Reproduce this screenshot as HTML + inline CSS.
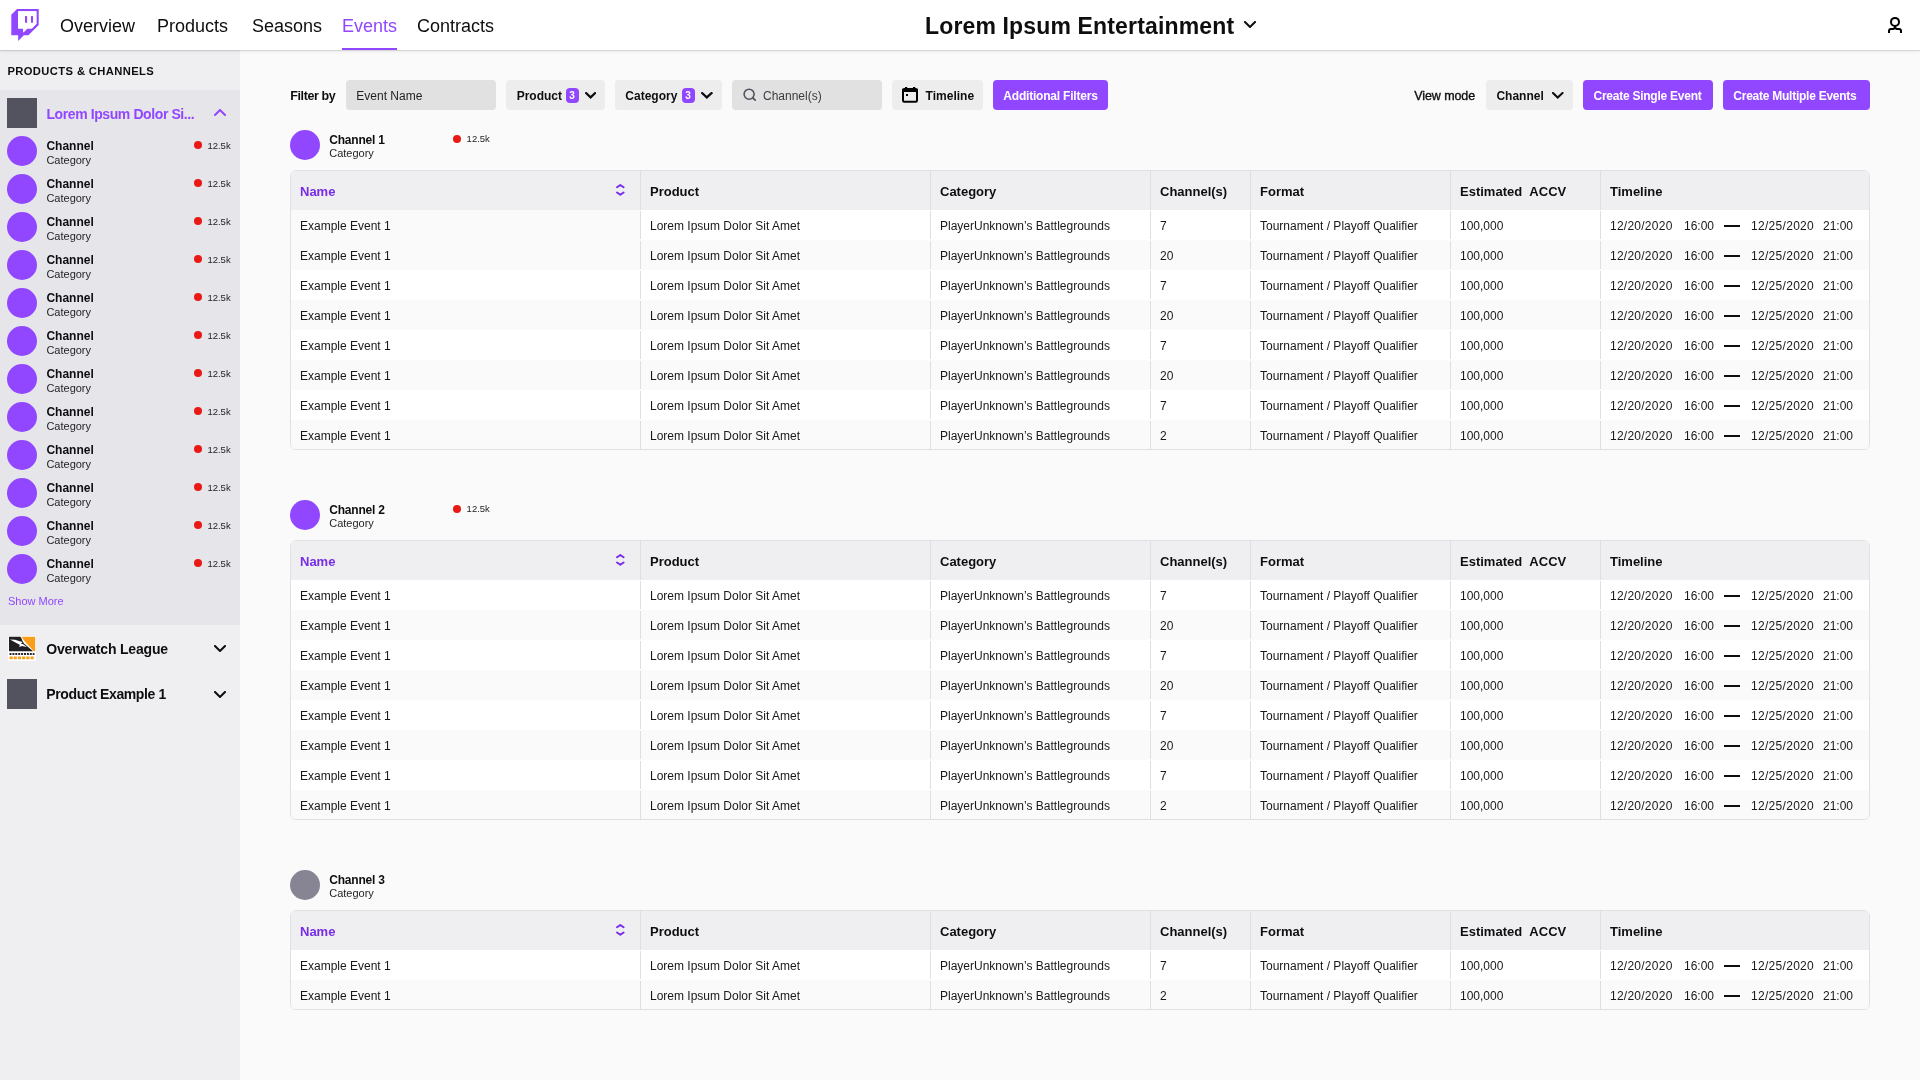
<!DOCTYPE html>
<html><head><meta charset="utf-8"><title>Events</title><style>
*{box-sizing:border-box;margin:0;padding:0}
html,body{width:1920px;height:1080px;overflow:hidden}
body{font-family:"Liberation Sans",sans-serif;background:#fafafa;color:#0e0e10;position:relative}
.a{position:absolute;white-space:nowrap}
#hdr{position:absolute;left:0;top:0;width:1920px;height:50px;background:#fff;box-shadow:0 1px 1px rgba(0,0,0,0.1),0 1px 4px rgba(0,0,0,0.08);z-index:5}
.nav{position:absolute;top:14px;font-size:18px;line-height:22px;color:#0e0e10}
#side{position:absolute;left:0;top:50px;width:240px;height:1030px;background:#efeff1}
.exp{position:absolute;left:0;top:40px;width:240px;height:535px;background:#e5e5ea}
.sq{position:absolute;width:30px;height:30px;background:#53535f}
.circ{position:absolute;width:30px;height:30px;border-radius:50%;background:#9147ff}
.chn{position:absolute;left:46px;font-size:12px;font-weight:700;line-height:14px}
.cat{position:absolute;left:46px;font-size:11px;line-height:13px;color:#1f1f23}
.dot{position:absolute;width:8px;height:8px;border-radius:50%;background:#e91916}
.vw{position:absolute;font-size:10px;line-height:12px;color:#1f1f23}
.btn{position:absolute;top:80px;height:30px;border-radius:4px;font-size:13px;line-height:30px;white-space:nowrap}
.gin{background:#e1e1e2}
.gdd{background:#ededee}
.pb{background:#9147ff;color:#fff;font-weight:700}
.badge{display:inline-block;width:13px;height:15px;border-radius:3px;background:#9147ff;color:#fff;font-size:11px;line-height:15px;text-align:center;font-weight:400;vertical-align:1px}
.tbl{position:absolute;left:290px;width:1580px;border:1px solid #e0e0e4;border-radius:6px;overflow:hidden;background:#fff}
.th{position:relative;height:39px;background:#efeff1}
.tr{position:relative;height:30px;background:#fff}
.tr.alt{background:#fafafa}
.c{position:absolute;top:0;height:100%;white-space:nowrap}
.th .c{font-size:13px;font-weight:700;line-height:39px;padding-left:10px;top:1px}
.th .c.f,.tr .c.f{padding-left:9px}
.tr .c{font-size:12px;line-height:30px;padding-left:10px;color:#18181b;top:1px}
.dv{position:absolute;width:1px;background:#dedee3}
</style></head>
<body><div id="root" style="position:absolute;left:0;top:0;width:1920px;height:1080px;overflow:hidden;will-change:transform">
<div id="side">
<div class="exp"></div>
</div>
<div class="a" style="left:7.4px;top:65.08px;font-size:11.2px;line-height:12.88px;font-weight:700;color:#0e0e10;letter-spacing:0.4px;">PRODUCTS &amp; CHANNELS</div>
<div class="sq" style="left:7px;top:98px"></div>
<div class="a" style="left:46.4px;top:105.50px;font-size:14px;line-height:16.1px;font-weight:700;color:#9147ff;letter-spacing:-0.4px;">Lorem Ipsum Dolor Si...</div>
<svg class="a" style="left:214px;top:109px" width="12" height="7" viewBox="0 0 12 7"><path d="M1.0,6.0 L6.0,1.0 L11.0,6.0" fill="none" stroke="#9147ff" stroke-width="2" stroke-linecap="square" stroke-linejoin="miter"/></svg>
<div class="circ" style="left:7px;top:136px"></div>
<div class="a" style="left:46.4px;top:140.44px;font-size:12px;line-height:13.8px;font-weight:700;">Channel</div>
<div class="a" style="left:46.4px;top:153.66px;font-size:11px;line-height:12.65px;color:#1f1f23;">Category</div>
<div class="dot" style="left:194px;top:141px"></div>
<div class="a" style="left:207.4px;top:140.75px;font-size:9.5px;line-height:10.92px;color:#1f1f23;">12.5k</div>
<div class="circ" style="left:7px;top:174px"></div>
<div class="a" style="left:46.4px;top:178.44px;font-size:12px;line-height:13.8px;font-weight:700;">Channel</div>
<div class="a" style="left:46.4px;top:191.66px;font-size:11px;line-height:12.65px;color:#1f1f23;">Category</div>
<div class="dot" style="left:194px;top:179px"></div>
<div class="a" style="left:207.4px;top:178.75px;font-size:9.5px;line-height:10.92px;color:#1f1f23;">12.5k</div>
<div class="circ" style="left:7px;top:212px"></div>
<div class="a" style="left:46.4px;top:216.44px;font-size:12px;line-height:13.8px;font-weight:700;">Channel</div>
<div class="a" style="left:46.4px;top:229.66px;font-size:11px;line-height:12.65px;color:#1f1f23;">Category</div>
<div class="dot" style="left:194px;top:217px"></div>
<div class="a" style="left:207.4px;top:216.75px;font-size:9.5px;line-height:10.92px;color:#1f1f23;">12.5k</div>
<div class="circ" style="left:7px;top:250px"></div>
<div class="a" style="left:46.4px;top:254.44px;font-size:12px;line-height:13.8px;font-weight:700;">Channel</div>
<div class="a" style="left:46.4px;top:267.66px;font-size:11px;line-height:12.65px;color:#1f1f23;">Category</div>
<div class="dot" style="left:194px;top:255px"></div>
<div class="a" style="left:207.4px;top:254.75px;font-size:9.5px;line-height:10.92px;color:#1f1f23;">12.5k</div>
<div class="circ" style="left:7px;top:288px"></div>
<div class="a" style="left:46.4px;top:292.44px;font-size:12px;line-height:13.8px;font-weight:700;">Channel</div>
<div class="a" style="left:46.4px;top:305.66px;font-size:11px;line-height:12.65px;color:#1f1f23;">Category</div>
<div class="dot" style="left:194px;top:293px"></div>
<div class="a" style="left:207.4px;top:292.75px;font-size:9.5px;line-height:10.92px;color:#1f1f23;">12.5k</div>
<div class="circ" style="left:7px;top:326px"></div>
<div class="a" style="left:46.4px;top:330.44px;font-size:12px;line-height:13.8px;font-weight:700;">Channel</div>
<div class="a" style="left:46.4px;top:343.66px;font-size:11px;line-height:12.65px;color:#1f1f23;">Category</div>
<div class="dot" style="left:194px;top:331px"></div>
<div class="a" style="left:207.4px;top:330.75px;font-size:9.5px;line-height:10.92px;color:#1f1f23;">12.5k</div>
<div class="circ" style="left:7px;top:364px"></div>
<div class="a" style="left:46.4px;top:368.44px;font-size:12px;line-height:13.8px;font-weight:700;">Channel</div>
<div class="a" style="left:46.4px;top:381.66px;font-size:11px;line-height:12.65px;color:#1f1f23;">Category</div>
<div class="dot" style="left:194px;top:369px"></div>
<div class="a" style="left:207.4px;top:368.75px;font-size:9.5px;line-height:10.92px;color:#1f1f23;">12.5k</div>
<div class="circ" style="left:7px;top:402px"></div>
<div class="a" style="left:46.4px;top:406.44px;font-size:12px;line-height:13.8px;font-weight:700;">Channel</div>
<div class="a" style="left:46.4px;top:419.66px;font-size:11px;line-height:12.65px;color:#1f1f23;">Category</div>
<div class="dot" style="left:194px;top:407px"></div>
<div class="a" style="left:207.4px;top:406.75px;font-size:9.5px;line-height:10.92px;color:#1f1f23;">12.5k</div>
<div class="circ" style="left:7px;top:440px"></div>
<div class="a" style="left:46.4px;top:444.44px;font-size:12px;line-height:13.8px;font-weight:700;">Channel</div>
<div class="a" style="left:46.4px;top:457.66px;font-size:11px;line-height:12.65px;color:#1f1f23;">Category</div>
<div class="dot" style="left:194px;top:445px"></div>
<div class="a" style="left:207.4px;top:444.75px;font-size:9.5px;line-height:10.92px;color:#1f1f23;">12.5k</div>
<div class="circ" style="left:7px;top:478px"></div>
<div class="a" style="left:46.4px;top:482.44px;font-size:12px;line-height:13.8px;font-weight:700;">Channel</div>
<div class="a" style="left:46.4px;top:495.66px;font-size:11px;line-height:12.65px;color:#1f1f23;">Category</div>
<div class="dot" style="left:194px;top:483px"></div>
<div class="a" style="left:207.4px;top:482.75px;font-size:9.5px;line-height:10.92px;color:#1f1f23;">12.5k</div>
<div class="circ" style="left:7px;top:516px"></div>
<div class="a" style="left:46.4px;top:520.44px;font-size:12px;line-height:13.8px;font-weight:700;">Channel</div>
<div class="a" style="left:46.4px;top:533.66px;font-size:11px;line-height:12.65px;color:#1f1f23;">Category</div>
<div class="dot" style="left:194px;top:521px"></div>
<div class="a" style="left:207.4px;top:520.75px;font-size:9.5px;line-height:10.92px;color:#1f1f23;">12.5k</div>
<div class="circ" style="left:7px;top:554px"></div>
<div class="a" style="left:46.4px;top:558.44px;font-size:12px;line-height:13.8px;font-weight:700;">Channel</div>
<div class="a" style="left:46.4px;top:571.66px;font-size:11px;line-height:12.65px;color:#1f1f23;">Category</div>
<div class="dot" style="left:194px;top:559px"></div>
<div class="a" style="left:207.4px;top:558.75px;font-size:9.5px;line-height:10.92px;color:#1f1f23;">12.5k</div>
<div class="a" style="left:8px;top:595.36px;font-size:11px;line-height:12.65px;color:#9147ff;">Show More</div>
<svg class="a" style="left:8px;top:636px" width="28" height="25" viewBox="0 0 28 25"><rect x="0" y="0" width="28" height="25" rx="1" fill="#fff"/><path d="M1,0.8 H12.5 L13.5,2.5 L14.5,5 L16,7.5 L19,10 L23,13.5 L25,15.3 H1 Z" fill="#202024"/><path d="M13.5,0.8 H27.2 V15.3 H25.6 L22,11 L19,8 L16,4.5 Z" fill="#f99e1a"/><path d="M2,3.5 L7,3.8 L11,5 L14.5,6 L13,7.5 L15.5,8.5 L19,11 L14,10 L11,11 L12,9 Z" fill="#fff"/><path d="M1.5,18 H26.5" stroke="#2a2a2e" stroke-width="1.8" stroke-dasharray="2 0.9"/><path d="M1.5,21.8 H26.5" stroke="#f99e1a" stroke-width="2.8" stroke-dasharray="3.2 1"/></svg>
<div class="a" style="left:46.3px;top:640.90px;font-size:14px;line-height:16.1px;font-weight:700;letter-spacing:-0.18px;">Overwatch League</div>
<svg class="a" style="left:214px;top:645px" width="12" height="7" viewBox="0 0 12 7"><path d="M1.0,1.0 L6.0,6.0 L11.0,1.0" fill="none" stroke="#0e0e10" stroke-width="2" stroke-linecap="square" stroke-linejoin="miter"/></svg>
<div class="sq" style="left:7px;top:679px"></div>
<div class="a" style="left:46.3px;top:685.90px;font-size:14px;line-height:16.1px;font-weight:700;letter-spacing:-0.38px;">Product Example 1</div>
<svg class="a" style="left:214px;top:691px" width="12" height="7" viewBox="0 0 12 7"><path d="M1.0,1.0 L6.0,6.0 L11.0,1.0" fill="none" stroke="#0e0e10" stroke-width="2" stroke-linecap="square" stroke-linejoin="miter"/></svg>
<div id="hdr">
<svg class="a" style="left:11px;top:9px" width="28" height="32" viewBox="0 0 2400 2800"><path fill="#9147ff" d="M500,0L0,500v1800h600v500l500-500h400l900-900V0H500z M2200,1300l-400,400h-400l-350,350v-350H600V200h1600V1300z"/><path fill="#fff" d="M2200,1300l-400,400h-400l-350,350v-350H600V200h1600V1300z"/><rect fill="#9147ff" x="1720" y="620" width="185" height="580"/><rect fill="#9147ff" x="1200" y="620" width="185" height="580"/></svg>
<div class="a" style="left:60px;top:16.01px;font-size:18px;line-height:20.7px;color:#0e0e10;">Overview</div>
<div class="a" style="left:157px;top:16.01px;font-size:18px;line-height:20.7px;color:#0e0e10;">Products</div>
<div class="a" style="left:252px;top:16.01px;font-size:18px;line-height:20.7px;color:#0e0e10;">Seasons</div>
<div class="a" style="left:342px;top:16.01px;font-size:18px;line-height:20.7px;color:#9147ff;">Events</div>
<div class="a" style="left:417px;top:16.01px;font-size:18px;line-height:20.7px;color:#0e0e10;">Contracts</div>
<div class="a" style="left:342px;top:48px;width:55px;height:2px;background:#9147ff"></div>
<div class="a" style="left:925px;top:12.91px;font-size:23px;line-height:26.45px;font-weight:700;letter-spacing:0.15px;">Lorem Ipsum Entertainment</div>
<svg class="a" style="left:1244px;top:21px" width="12" height="7" viewBox="0 0 12 7"><path d="M1.0,1.0 L6.0,6.0 L11.0,1.0" fill="none" stroke="#0e0e10" stroke-width="2" stroke-linecap="square" stroke-linejoin="miter"/></svg>
<svg class="a" style="left:1880px;top:10px" width="30" height="30" viewBox="0 0 30 30"><circle cx="15" cy="11.9" r="4" fill="none" stroke="#000" stroke-width="2"/><path d="M9,23 V21 Q9,19 11,19 H13 Q14.6,19 15,16.8 Q15.4,19 17,19 H19 Q21,19 21,21 V23" fill="none" stroke="#000" stroke-width="2" stroke-linejoin="round"/></svg>
</div>
<div class="a" style="left:290.3px;top:89.48px;font-size:12.5px;line-height:14.37px;font-weight:700;color:#0e0e10;letter-spacing:-0.4px;">Filter by</div>
<div class="btn gin" style="left:346px;width:150px"></div>
<div class="a" style="left:356.3px;top:89.94px;font-size:12px;line-height:13.8px;color:#1f1f23;">Event Name</div>
<div class="btn gdd" style="left:506px;width:99px"></div>
<div class="a" style="left:516.7px;top:89.94px;font-size:12px;line-height:13.8px;font-weight:700;">Product</div>
<div class="a" style="left:566px;top:88px;width:13px;height:15px;border-radius:4px;background:#9147ff"></div>
<div class="a" style="left:569.3px;top:90.48px;font-size:10px;line-height:11.5px;font-weight:700;color:#fff;">3</div>
<svg class="a" style="left:584.5px;top:92px" width="11.2" height="6.5" viewBox="0 0 11.2 6.5"><path d="M1.1,1.1 L5.6,5.4 L10.1,1.1" fill="none" stroke="#0e0e10" stroke-width="2.2" stroke-linecap="square" stroke-linejoin="miter"/></svg>
<div class="btn gdd" style="left:615px;width:107px"></div>
<div class="a" style="left:625.3px;top:89.94px;font-size:12px;line-height:13.8px;font-weight:700;">Category</div>
<div class="a" style="left:682px;top:88px;width:13px;height:15px;border-radius:4px;background:#9147ff"></div>
<div class="a" style="left:685.3px;top:90.48px;font-size:10px;line-height:11.5px;font-weight:700;color:#fff;">3</div>
<svg class="a" style="left:701.2px;top:92px" width="11.6" height="6.5" viewBox="0 0 11.6 6.5"><path d="M1.1,1.1 L5.8,5.4 L10.5,1.1" fill="none" stroke="#0e0e10" stroke-width="2.2" stroke-linecap="square" stroke-linejoin="miter"/></svg>
<div class="btn gin" style="left:732px;width:150px"></div>
<svg class="a" style="left:742px;top:87px" width="16" height="16" viewBox="0 0 16 16"><circle cx="7.1" cy="7.2" r="5" fill="none" stroke="#53535f" stroke-width="1.6"/><path d="M10.9,11 L13.2,13.1" stroke="#53535f" stroke-width="1.7" stroke-linecap="round"/></svg>
<div class="a" style="left:763px;top:89.94px;font-size:12px;line-height:13.8px;color:#3a3a3f;">Channel(s)</div>
<div class="btn gdd" style="left:892px;width:91px"></div>
<svg class="a" style="left:901px;top:86px" width="18" height="18" viewBox="0 0 18 18"><rect x="2" y="3" width="14" height="12.8" rx="1.2" fill="none" stroke="#000" stroke-width="2"/><rect x="1" y="3" width="16" height="3" fill="#000"/><rect x="4" y="1" width="2.2" height="3" fill="#000"/><rect x="12" y="1" width="2.2" height="3" fill="#000"/><rect x="5" y="8" width="2" height="2" fill="#000"/></svg>
<div class="a" style="left:925.6px;top:89.94px;font-size:12px;line-height:13.8px;font-weight:700;">Timeline</div>
<div class="btn pb" style="left:993px;width:115px"></div>
<div class="a" style="left:1003.3px;top:89.94px;font-size:12px;line-height:13.8px;font-weight:700;color:#fff;letter-spacing:-0.2px;">Additional Filters</div>
<div class="a" style="left:1414.3px;top:89.48px;font-size:12.5px;line-height:14.37px;color:#0e0e10;letter-spacing:-0.1px;-webkit-text-stroke:0.35px #0e0e10;">View mode</div>
<div class="btn gdd" style="left:1486px;width:87px"></div>
<div class="a" style="left:1496.4px;top:89.94px;font-size:12px;line-height:13.8px;font-weight:700;">Channel</div>
<svg class="a" style="left:1552px;top:92px" width="11.5" height="6.5" viewBox="0 0 11.5 6.5"><path d="M1.0,1.0 L5.75,5.5 L10.5,1.0" fill="none" stroke="#0e0e10" stroke-width="2" stroke-linecap="square" stroke-linejoin="miter"/></svg>
<div class="btn pb" style="left:1583px;width:130px"></div>
<div class="a" style="left:1593.5px;top:89.94px;font-size:12px;line-height:13.8px;font-weight:700;color:#fff;letter-spacing:-0.25px;">Create Single Event</div>
<div class="btn pb" style="left:1723px;width:147px"></div>
<div class="a" style="left:1733.3px;top:89.94px;font-size:12px;line-height:13.8px;font-weight:700;color:#fff;letter-spacing:-0.25px;">Create Multiple Events</div>
<div class="circ" style="left:290px;top:130px;background:#9147ff"></div>
<div class="a" style="left:329.2px;top:133.74px;font-size:12px;line-height:13.8px;font-weight:700;letter-spacing:-0.2px;">Channel 1</div>
<div class="a" style="left:329.2px;top:147.16px;font-size:11px;line-height:12.65px;color:#1f1f23;">Category</div>
<div class="dot" style="left:453px;top:134.8px"></div>
<div class="a" style="left:466.6px;top:134.35px;font-size:9.5px;line-height:10.92px;color:#1f1f23;">12.5k</div>
<div class="tbl" style="top:170px;height:280px">
<div class="th">
<div class="c f" style="left:0px;width:349px;color:#772ce8">Name</div>
<div class="c" style="left:349px;width:290px;color:#0e0e10">Product</div>
<div class="dv" style="left:349px;top:0;height:39px"></div>
<div class="c" style="left:639px;width:220px;color:#0e0e10">Category</div>
<div class="dv" style="left:639px;top:0;height:39px"></div>
<div class="c" style="left:859px;width:100px;color:#0e0e10">Channel(s)</div>
<div class="dv" style="left:859px;top:0;height:39px"></div>
<div class="c" style="left:959px;width:200px;color:#0e0e10">Format</div>
<div class="dv" style="left:959px;top:0;height:39px"></div>
<div class="c" style="left:1159px;width:150px;color:#0e0e10">Estimated&nbsp;&nbsp;ACCV</div>
<div class="dv" style="left:1159px;top:0;height:39px"></div>
<div class="c" style="left:1309px;width:269px;color:#0e0e10">Timeline</div>
<div class="dv" style="left:1309px;top:0;height:39px"></div>
<svg class="a" style="left:325px;top:13px" width="9" height="13" viewBox="0 0 9 13"><path d="M1,3.3 L4.3,1.0 L7.6,3.3 M1,8.5 L4.3,10.8 L7.6,8.5" fill="none" stroke="#772ce8" stroke-width="1.9" stroke-linejoin="round" stroke-linecap="round"/></svg>
</div>
<div class="tr">
<div class="a" style="left:0;top:0;width:349px;height:30px;background:#fafafa"></div>
<div class="c f" style="left:0px;width:349px">Example Event 1</div>
<div class="c" style="left:349px;width:290px">Lorem Ipsum Dolor Sit Amet</div>
<div class="c" style="left:639px;width:220px">PlayerUnknown’s Battlegrounds</div>
<div class="c" style="left:859px;width:100px">7</div>
<div class="c" style="left:959px;width:200px">Tournament / Playoff Qualifier</div>
<div class="c" style="left:1159px;width:150px">100,000</div>
<div class="c" style="left:1309px;width:269px"><span class="a" style="left:10px;letter-spacing:0.25px">12/20/2020</span><span class="a" style="left:84px">16:00</span><span class="a" style="left:124px;top:14px;width:16px;height:2px;background:#0e0e10"></span><span class="a" style="left:151px;letter-spacing:0.3px">12/25/2020</span><span class="a" style="left:223px">21:00</span></div>
<div class="dv" style="left:349px;top:1px;height:28px"></div>
<div class="dv" style="left:639px;top:1px;height:28px"></div>
<div class="dv" style="left:859px;top:1px;height:28px"></div>
<div class="dv" style="left:959px;top:1px;height:28px"></div>
<div class="dv" style="left:1159px;top:1px;height:28px"></div>
<div class="dv" style="left:1309px;top:1px;height:28px"></div>
</div>
<div class="tr alt">
<div class="c f" style="left:0px;width:349px">Example Event 1</div>
<div class="c" style="left:349px;width:290px">Lorem Ipsum Dolor Sit Amet</div>
<div class="c" style="left:639px;width:220px">PlayerUnknown’s Battlegrounds</div>
<div class="c" style="left:859px;width:100px">20</div>
<div class="c" style="left:959px;width:200px">Tournament / Playoff Qualifier</div>
<div class="c" style="left:1159px;width:150px">100,000</div>
<div class="c" style="left:1309px;width:269px"><span class="a" style="left:10px;letter-spacing:0.25px">12/20/2020</span><span class="a" style="left:84px">16:00</span><span class="a" style="left:124px;top:14px;width:16px;height:2px;background:#0e0e10"></span><span class="a" style="left:151px;letter-spacing:0.3px">12/25/2020</span><span class="a" style="left:223px">21:00</span></div>
<div class="dv" style="left:349px;top:1px;height:28px"></div>
<div class="dv" style="left:639px;top:1px;height:28px"></div>
<div class="dv" style="left:859px;top:1px;height:28px"></div>
<div class="dv" style="left:959px;top:1px;height:28px"></div>
<div class="dv" style="left:1159px;top:1px;height:28px"></div>
<div class="dv" style="left:1309px;top:1px;height:28px"></div>
</div>
<div class="tr">
<div class="c f" style="left:0px;width:349px">Example Event 1</div>
<div class="c" style="left:349px;width:290px">Lorem Ipsum Dolor Sit Amet</div>
<div class="c" style="left:639px;width:220px">PlayerUnknown’s Battlegrounds</div>
<div class="c" style="left:859px;width:100px">7</div>
<div class="c" style="left:959px;width:200px">Tournament / Playoff Qualifier</div>
<div class="c" style="left:1159px;width:150px">100,000</div>
<div class="c" style="left:1309px;width:269px"><span class="a" style="left:10px;letter-spacing:0.25px">12/20/2020</span><span class="a" style="left:84px">16:00</span><span class="a" style="left:124px;top:14px;width:16px;height:2px;background:#0e0e10"></span><span class="a" style="left:151px;letter-spacing:0.3px">12/25/2020</span><span class="a" style="left:223px">21:00</span></div>
<div class="dv" style="left:349px;top:1px;height:28px"></div>
<div class="dv" style="left:639px;top:1px;height:28px"></div>
<div class="dv" style="left:859px;top:1px;height:28px"></div>
<div class="dv" style="left:959px;top:1px;height:28px"></div>
<div class="dv" style="left:1159px;top:1px;height:28px"></div>
<div class="dv" style="left:1309px;top:1px;height:28px"></div>
</div>
<div class="tr alt">
<div class="c f" style="left:0px;width:349px">Example Event 1</div>
<div class="c" style="left:349px;width:290px">Lorem Ipsum Dolor Sit Amet</div>
<div class="c" style="left:639px;width:220px">PlayerUnknown’s Battlegrounds</div>
<div class="c" style="left:859px;width:100px">20</div>
<div class="c" style="left:959px;width:200px">Tournament / Playoff Qualifier</div>
<div class="c" style="left:1159px;width:150px">100,000</div>
<div class="c" style="left:1309px;width:269px"><span class="a" style="left:10px;letter-spacing:0.25px">12/20/2020</span><span class="a" style="left:84px">16:00</span><span class="a" style="left:124px;top:14px;width:16px;height:2px;background:#0e0e10"></span><span class="a" style="left:151px;letter-spacing:0.3px">12/25/2020</span><span class="a" style="left:223px">21:00</span></div>
<div class="dv" style="left:349px;top:1px;height:28px"></div>
<div class="dv" style="left:639px;top:1px;height:28px"></div>
<div class="dv" style="left:859px;top:1px;height:28px"></div>
<div class="dv" style="left:959px;top:1px;height:28px"></div>
<div class="dv" style="left:1159px;top:1px;height:28px"></div>
<div class="dv" style="left:1309px;top:1px;height:28px"></div>
</div>
<div class="tr">
<div class="c f" style="left:0px;width:349px">Example Event 1</div>
<div class="c" style="left:349px;width:290px">Lorem Ipsum Dolor Sit Amet</div>
<div class="c" style="left:639px;width:220px">PlayerUnknown’s Battlegrounds</div>
<div class="c" style="left:859px;width:100px">7</div>
<div class="c" style="left:959px;width:200px">Tournament / Playoff Qualifier</div>
<div class="c" style="left:1159px;width:150px">100,000</div>
<div class="c" style="left:1309px;width:269px"><span class="a" style="left:10px;letter-spacing:0.25px">12/20/2020</span><span class="a" style="left:84px">16:00</span><span class="a" style="left:124px;top:14px;width:16px;height:2px;background:#0e0e10"></span><span class="a" style="left:151px;letter-spacing:0.3px">12/25/2020</span><span class="a" style="left:223px">21:00</span></div>
<div class="dv" style="left:349px;top:1px;height:28px"></div>
<div class="dv" style="left:639px;top:1px;height:28px"></div>
<div class="dv" style="left:859px;top:1px;height:28px"></div>
<div class="dv" style="left:959px;top:1px;height:28px"></div>
<div class="dv" style="left:1159px;top:1px;height:28px"></div>
<div class="dv" style="left:1309px;top:1px;height:28px"></div>
</div>
<div class="tr alt">
<div class="c f" style="left:0px;width:349px">Example Event 1</div>
<div class="c" style="left:349px;width:290px">Lorem Ipsum Dolor Sit Amet</div>
<div class="c" style="left:639px;width:220px">PlayerUnknown’s Battlegrounds</div>
<div class="c" style="left:859px;width:100px">20</div>
<div class="c" style="left:959px;width:200px">Tournament / Playoff Qualifier</div>
<div class="c" style="left:1159px;width:150px">100,000</div>
<div class="c" style="left:1309px;width:269px"><span class="a" style="left:10px;letter-spacing:0.25px">12/20/2020</span><span class="a" style="left:84px">16:00</span><span class="a" style="left:124px;top:14px;width:16px;height:2px;background:#0e0e10"></span><span class="a" style="left:151px;letter-spacing:0.3px">12/25/2020</span><span class="a" style="left:223px">21:00</span></div>
<div class="dv" style="left:349px;top:1px;height:28px"></div>
<div class="dv" style="left:639px;top:1px;height:28px"></div>
<div class="dv" style="left:859px;top:1px;height:28px"></div>
<div class="dv" style="left:959px;top:1px;height:28px"></div>
<div class="dv" style="left:1159px;top:1px;height:28px"></div>
<div class="dv" style="left:1309px;top:1px;height:28px"></div>
</div>
<div class="tr">
<div class="c f" style="left:0px;width:349px">Example Event 1</div>
<div class="c" style="left:349px;width:290px">Lorem Ipsum Dolor Sit Amet</div>
<div class="c" style="left:639px;width:220px">PlayerUnknown’s Battlegrounds</div>
<div class="c" style="left:859px;width:100px">7</div>
<div class="c" style="left:959px;width:200px">Tournament / Playoff Qualifier</div>
<div class="c" style="left:1159px;width:150px">100,000</div>
<div class="c" style="left:1309px;width:269px"><span class="a" style="left:10px;letter-spacing:0.25px">12/20/2020</span><span class="a" style="left:84px">16:00</span><span class="a" style="left:124px;top:14px;width:16px;height:2px;background:#0e0e10"></span><span class="a" style="left:151px;letter-spacing:0.3px">12/25/2020</span><span class="a" style="left:223px">21:00</span></div>
<div class="dv" style="left:349px;top:1px;height:28px"></div>
<div class="dv" style="left:639px;top:1px;height:28px"></div>
<div class="dv" style="left:859px;top:1px;height:28px"></div>
<div class="dv" style="left:959px;top:1px;height:28px"></div>
<div class="dv" style="left:1159px;top:1px;height:28px"></div>
<div class="dv" style="left:1309px;top:1px;height:28px"></div>
</div>
<div class="tr alt">
<div class="c f" style="left:0px;width:349px">Example Event 1</div>
<div class="c" style="left:349px;width:290px">Lorem Ipsum Dolor Sit Amet</div>
<div class="c" style="left:639px;width:220px">PlayerUnknown’s Battlegrounds</div>
<div class="c" style="left:859px;width:100px">2</div>
<div class="c" style="left:959px;width:200px">Tournament / Playoff Qualifier</div>
<div class="c" style="left:1159px;width:150px">100,000</div>
<div class="c" style="left:1309px;width:269px"><span class="a" style="left:10px;letter-spacing:0.25px">12/20/2020</span><span class="a" style="left:84px">16:00</span><span class="a" style="left:124px;top:14px;width:16px;height:2px;background:#0e0e10"></span><span class="a" style="left:151px;letter-spacing:0.3px">12/25/2020</span><span class="a" style="left:223px">21:00</span></div>
<div class="dv" style="left:349px;top:1px;height:28px"></div>
<div class="dv" style="left:639px;top:1px;height:28px"></div>
<div class="dv" style="left:859px;top:1px;height:28px"></div>
<div class="dv" style="left:959px;top:1px;height:28px"></div>
<div class="dv" style="left:1159px;top:1px;height:28px"></div>
<div class="dv" style="left:1309px;top:1px;height:28px"></div>
</div>
</div>
<div class="circ" style="left:290px;top:500px;background:#9147ff"></div>
<div class="a" style="left:329.2px;top:503.74px;font-size:12px;line-height:13.8px;font-weight:700;letter-spacing:-0.2px;">Channel 2</div>
<div class="a" style="left:329.2px;top:517.16px;font-size:11px;line-height:12.65px;color:#1f1f23;">Category</div>
<div class="dot" style="left:453px;top:504.8px"></div>
<div class="a" style="left:466.6px;top:504.35px;font-size:9.5px;line-height:10.92px;color:#1f1f23;">12.5k</div>
<div class="tbl" style="top:540px;height:280px">
<div class="th">
<div class="c f" style="left:0px;width:349px;color:#772ce8">Name</div>
<div class="c" style="left:349px;width:290px;color:#0e0e10">Product</div>
<div class="dv" style="left:349px;top:0;height:39px"></div>
<div class="c" style="left:639px;width:220px;color:#0e0e10">Category</div>
<div class="dv" style="left:639px;top:0;height:39px"></div>
<div class="c" style="left:859px;width:100px;color:#0e0e10">Channel(s)</div>
<div class="dv" style="left:859px;top:0;height:39px"></div>
<div class="c" style="left:959px;width:200px;color:#0e0e10">Format</div>
<div class="dv" style="left:959px;top:0;height:39px"></div>
<div class="c" style="left:1159px;width:150px;color:#0e0e10">Estimated&nbsp;&nbsp;ACCV</div>
<div class="dv" style="left:1159px;top:0;height:39px"></div>
<div class="c" style="left:1309px;width:269px;color:#0e0e10">Timeline</div>
<div class="dv" style="left:1309px;top:0;height:39px"></div>
<svg class="a" style="left:325px;top:13px" width="9" height="13" viewBox="0 0 9 13"><path d="M1,3.3 L4.3,1.0 L7.6,3.3 M1,8.5 L4.3,10.8 L7.6,8.5" fill="none" stroke="#772ce8" stroke-width="1.9" stroke-linejoin="round" stroke-linecap="round"/></svg>
</div>
<div class="tr">
<div class="c f" style="left:0px;width:349px">Example Event 1</div>
<div class="c" style="left:349px;width:290px">Lorem Ipsum Dolor Sit Amet</div>
<div class="c" style="left:639px;width:220px">PlayerUnknown’s Battlegrounds</div>
<div class="c" style="left:859px;width:100px">7</div>
<div class="c" style="left:959px;width:200px">Tournament / Playoff Qualifier</div>
<div class="c" style="left:1159px;width:150px">100,000</div>
<div class="c" style="left:1309px;width:269px"><span class="a" style="left:10px;letter-spacing:0.25px">12/20/2020</span><span class="a" style="left:84px">16:00</span><span class="a" style="left:124px;top:14px;width:16px;height:2px;background:#0e0e10"></span><span class="a" style="left:151px;letter-spacing:0.3px">12/25/2020</span><span class="a" style="left:223px">21:00</span></div>
<div class="dv" style="left:349px;top:1px;height:28px"></div>
<div class="dv" style="left:639px;top:1px;height:28px"></div>
<div class="dv" style="left:859px;top:1px;height:28px"></div>
<div class="dv" style="left:959px;top:1px;height:28px"></div>
<div class="dv" style="left:1159px;top:1px;height:28px"></div>
<div class="dv" style="left:1309px;top:1px;height:28px"></div>
</div>
<div class="tr alt">
<div class="c f" style="left:0px;width:349px">Example Event 1</div>
<div class="c" style="left:349px;width:290px">Lorem Ipsum Dolor Sit Amet</div>
<div class="c" style="left:639px;width:220px">PlayerUnknown’s Battlegrounds</div>
<div class="c" style="left:859px;width:100px">20</div>
<div class="c" style="left:959px;width:200px">Tournament / Playoff Qualifier</div>
<div class="c" style="left:1159px;width:150px">100,000</div>
<div class="c" style="left:1309px;width:269px"><span class="a" style="left:10px;letter-spacing:0.25px">12/20/2020</span><span class="a" style="left:84px">16:00</span><span class="a" style="left:124px;top:14px;width:16px;height:2px;background:#0e0e10"></span><span class="a" style="left:151px;letter-spacing:0.3px">12/25/2020</span><span class="a" style="left:223px">21:00</span></div>
<div class="dv" style="left:349px;top:1px;height:28px"></div>
<div class="dv" style="left:639px;top:1px;height:28px"></div>
<div class="dv" style="left:859px;top:1px;height:28px"></div>
<div class="dv" style="left:959px;top:1px;height:28px"></div>
<div class="dv" style="left:1159px;top:1px;height:28px"></div>
<div class="dv" style="left:1309px;top:1px;height:28px"></div>
</div>
<div class="tr">
<div class="c f" style="left:0px;width:349px">Example Event 1</div>
<div class="c" style="left:349px;width:290px">Lorem Ipsum Dolor Sit Amet</div>
<div class="c" style="left:639px;width:220px">PlayerUnknown’s Battlegrounds</div>
<div class="c" style="left:859px;width:100px">7</div>
<div class="c" style="left:959px;width:200px">Tournament / Playoff Qualifier</div>
<div class="c" style="left:1159px;width:150px">100,000</div>
<div class="c" style="left:1309px;width:269px"><span class="a" style="left:10px;letter-spacing:0.25px">12/20/2020</span><span class="a" style="left:84px">16:00</span><span class="a" style="left:124px;top:14px;width:16px;height:2px;background:#0e0e10"></span><span class="a" style="left:151px;letter-spacing:0.3px">12/25/2020</span><span class="a" style="left:223px">21:00</span></div>
<div class="dv" style="left:349px;top:1px;height:28px"></div>
<div class="dv" style="left:639px;top:1px;height:28px"></div>
<div class="dv" style="left:859px;top:1px;height:28px"></div>
<div class="dv" style="left:959px;top:1px;height:28px"></div>
<div class="dv" style="left:1159px;top:1px;height:28px"></div>
<div class="dv" style="left:1309px;top:1px;height:28px"></div>
</div>
<div class="tr alt">
<div class="c f" style="left:0px;width:349px">Example Event 1</div>
<div class="c" style="left:349px;width:290px">Lorem Ipsum Dolor Sit Amet</div>
<div class="c" style="left:639px;width:220px">PlayerUnknown’s Battlegrounds</div>
<div class="c" style="left:859px;width:100px">20</div>
<div class="c" style="left:959px;width:200px">Tournament / Playoff Qualifier</div>
<div class="c" style="left:1159px;width:150px">100,000</div>
<div class="c" style="left:1309px;width:269px"><span class="a" style="left:10px;letter-spacing:0.25px">12/20/2020</span><span class="a" style="left:84px">16:00</span><span class="a" style="left:124px;top:14px;width:16px;height:2px;background:#0e0e10"></span><span class="a" style="left:151px;letter-spacing:0.3px">12/25/2020</span><span class="a" style="left:223px">21:00</span></div>
<div class="dv" style="left:349px;top:1px;height:28px"></div>
<div class="dv" style="left:639px;top:1px;height:28px"></div>
<div class="dv" style="left:859px;top:1px;height:28px"></div>
<div class="dv" style="left:959px;top:1px;height:28px"></div>
<div class="dv" style="left:1159px;top:1px;height:28px"></div>
<div class="dv" style="left:1309px;top:1px;height:28px"></div>
</div>
<div class="tr">
<div class="c f" style="left:0px;width:349px">Example Event 1</div>
<div class="c" style="left:349px;width:290px">Lorem Ipsum Dolor Sit Amet</div>
<div class="c" style="left:639px;width:220px">PlayerUnknown’s Battlegrounds</div>
<div class="c" style="left:859px;width:100px">7</div>
<div class="c" style="left:959px;width:200px">Tournament / Playoff Qualifier</div>
<div class="c" style="left:1159px;width:150px">100,000</div>
<div class="c" style="left:1309px;width:269px"><span class="a" style="left:10px;letter-spacing:0.25px">12/20/2020</span><span class="a" style="left:84px">16:00</span><span class="a" style="left:124px;top:14px;width:16px;height:2px;background:#0e0e10"></span><span class="a" style="left:151px;letter-spacing:0.3px">12/25/2020</span><span class="a" style="left:223px">21:00</span></div>
<div class="dv" style="left:349px;top:1px;height:28px"></div>
<div class="dv" style="left:639px;top:1px;height:28px"></div>
<div class="dv" style="left:859px;top:1px;height:28px"></div>
<div class="dv" style="left:959px;top:1px;height:28px"></div>
<div class="dv" style="left:1159px;top:1px;height:28px"></div>
<div class="dv" style="left:1309px;top:1px;height:28px"></div>
</div>
<div class="tr alt">
<div class="c f" style="left:0px;width:349px">Example Event 1</div>
<div class="c" style="left:349px;width:290px">Lorem Ipsum Dolor Sit Amet</div>
<div class="c" style="left:639px;width:220px">PlayerUnknown’s Battlegrounds</div>
<div class="c" style="left:859px;width:100px">20</div>
<div class="c" style="left:959px;width:200px">Tournament / Playoff Qualifier</div>
<div class="c" style="left:1159px;width:150px">100,000</div>
<div class="c" style="left:1309px;width:269px"><span class="a" style="left:10px;letter-spacing:0.25px">12/20/2020</span><span class="a" style="left:84px">16:00</span><span class="a" style="left:124px;top:14px;width:16px;height:2px;background:#0e0e10"></span><span class="a" style="left:151px;letter-spacing:0.3px">12/25/2020</span><span class="a" style="left:223px">21:00</span></div>
<div class="dv" style="left:349px;top:1px;height:28px"></div>
<div class="dv" style="left:639px;top:1px;height:28px"></div>
<div class="dv" style="left:859px;top:1px;height:28px"></div>
<div class="dv" style="left:959px;top:1px;height:28px"></div>
<div class="dv" style="left:1159px;top:1px;height:28px"></div>
<div class="dv" style="left:1309px;top:1px;height:28px"></div>
</div>
<div class="tr">
<div class="c f" style="left:0px;width:349px">Example Event 1</div>
<div class="c" style="left:349px;width:290px">Lorem Ipsum Dolor Sit Amet</div>
<div class="c" style="left:639px;width:220px">PlayerUnknown’s Battlegrounds</div>
<div class="c" style="left:859px;width:100px">7</div>
<div class="c" style="left:959px;width:200px">Tournament / Playoff Qualifier</div>
<div class="c" style="left:1159px;width:150px">100,000</div>
<div class="c" style="left:1309px;width:269px"><span class="a" style="left:10px;letter-spacing:0.25px">12/20/2020</span><span class="a" style="left:84px">16:00</span><span class="a" style="left:124px;top:14px;width:16px;height:2px;background:#0e0e10"></span><span class="a" style="left:151px;letter-spacing:0.3px">12/25/2020</span><span class="a" style="left:223px">21:00</span></div>
<div class="dv" style="left:349px;top:1px;height:28px"></div>
<div class="dv" style="left:639px;top:1px;height:28px"></div>
<div class="dv" style="left:859px;top:1px;height:28px"></div>
<div class="dv" style="left:959px;top:1px;height:28px"></div>
<div class="dv" style="left:1159px;top:1px;height:28px"></div>
<div class="dv" style="left:1309px;top:1px;height:28px"></div>
</div>
<div class="tr alt">
<div class="c f" style="left:0px;width:349px">Example Event 1</div>
<div class="c" style="left:349px;width:290px">Lorem Ipsum Dolor Sit Amet</div>
<div class="c" style="left:639px;width:220px">PlayerUnknown’s Battlegrounds</div>
<div class="c" style="left:859px;width:100px">2</div>
<div class="c" style="left:959px;width:200px">Tournament / Playoff Qualifier</div>
<div class="c" style="left:1159px;width:150px">100,000</div>
<div class="c" style="left:1309px;width:269px"><span class="a" style="left:10px;letter-spacing:0.25px">12/20/2020</span><span class="a" style="left:84px">16:00</span><span class="a" style="left:124px;top:14px;width:16px;height:2px;background:#0e0e10"></span><span class="a" style="left:151px;letter-spacing:0.3px">12/25/2020</span><span class="a" style="left:223px">21:00</span></div>
<div class="dv" style="left:349px;top:1px;height:28px"></div>
<div class="dv" style="left:639px;top:1px;height:28px"></div>
<div class="dv" style="left:859px;top:1px;height:28px"></div>
<div class="dv" style="left:959px;top:1px;height:28px"></div>
<div class="dv" style="left:1159px;top:1px;height:28px"></div>
<div class="dv" style="left:1309px;top:1px;height:28px"></div>
</div>
</div>
<div class="circ" style="left:290px;top:870px;background:#878593"></div>
<div class="a" style="left:329.2px;top:873.74px;font-size:12px;line-height:13.8px;font-weight:700;letter-spacing:-0.2px;">Channel 3</div>
<div class="a" style="left:329.2px;top:887.16px;font-size:11px;line-height:12.65px;color:#1f1f23;">Category</div>
<div class="tbl" style="top:910px;height:100px">
<div class="th">
<div class="c f" style="left:0px;width:349px;color:#772ce8">Name</div>
<div class="c" style="left:349px;width:290px;color:#0e0e10">Product</div>
<div class="dv" style="left:349px;top:0;height:39px"></div>
<div class="c" style="left:639px;width:220px;color:#0e0e10">Category</div>
<div class="dv" style="left:639px;top:0;height:39px"></div>
<div class="c" style="left:859px;width:100px;color:#0e0e10">Channel(s)</div>
<div class="dv" style="left:859px;top:0;height:39px"></div>
<div class="c" style="left:959px;width:200px;color:#0e0e10">Format</div>
<div class="dv" style="left:959px;top:0;height:39px"></div>
<div class="c" style="left:1159px;width:150px;color:#0e0e10">Estimated&nbsp;&nbsp;ACCV</div>
<div class="dv" style="left:1159px;top:0;height:39px"></div>
<div class="c" style="left:1309px;width:269px;color:#0e0e10">Timeline</div>
<div class="dv" style="left:1309px;top:0;height:39px"></div>
<svg class="a" style="left:325px;top:13px" width="9" height="13" viewBox="0 0 9 13"><path d="M1,3.3 L4.3,1.0 L7.6,3.3 M1,8.5 L4.3,10.8 L7.6,8.5" fill="none" stroke="#772ce8" stroke-width="1.9" stroke-linejoin="round" stroke-linecap="round"/></svg>
</div>
<div class="tr">
<div class="c f" style="left:0px;width:349px">Example Event 1</div>
<div class="c" style="left:349px;width:290px">Lorem Ipsum Dolor Sit Amet</div>
<div class="c" style="left:639px;width:220px">PlayerUnknown’s Battlegrounds</div>
<div class="c" style="left:859px;width:100px">7</div>
<div class="c" style="left:959px;width:200px">Tournament / Playoff Qualifier</div>
<div class="c" style="left:1159px;width:150px">100,000</div>
<div class="c" style="left:1309px;width:269px"><span class="a" style="left:10px;letter-spacing:0.25px">12/20/2020</span><span class="a" style="left:84px">16:00</span><span class="a" style="left:124px;top:14px;width:16px;height:2px;background:#0e0e10"></span><span class="a" style="left:151px;letter-spacing:0.3px">12/25/2020</span><span class="a" style="left:223px">21:00</span></div>
<div class="dv" style="left:349px;top:1px;height:28px"></div>
<div class="dv" style="left:639px;top:1px;height:28px"></div>
<div class="dv" style="left:859px;top:1px;height:28px"></div>
<div class="dv" style="left:959px;top:1px;height:28px"></div>
<div class="dv" style="left:1159px;top:1px;height:28px"></div>
<div class="dv" style="left:1309px;top:1px;height:28px"></div>
</div>
<div class="tr alt">
<div class="c f" style="left:0px;width:349px">Example Event 1</div>
<div class="c" style="left:349px;width:290px">Lorem Ipsum Dolor Sit Amet</div>
<div class="c" style="left:639px;width:220px">PlayerUnknown’s Battlegrounds</div>
<div class="c" style="left:859px;width:100px">2</div>
<div class="c" style="left:959px;width:200px">Tournament / Playoff Qualifier</div>
<div class="c" style="left:1159px;width:150px">100,000</div>
<div class="c" style="left:1309px;width:269px"><span class="a" style="left:10px;letter-spacing:0.25px">12/20/2020</span><span class="a" style="left:84px">16:00</span><span class="a" style="left:124px;top:14px;width:16px;height:2px;background:#0e0e10"></span><span class="a" style="left:151px;letter-spacing:0.3px">12/25/2020</span><span class="a" style="left:223px">21:00</span></div>
<div class="dv" style="left:349px;top:1px;height:28px"></div>
<div class="dv" style="left:639px;top:1px;height:28px"></div>
<div class="dv" style="left:859px;top:1px;height:28px"></div>
<div class="dv" style="left:959px;top:1px;height:28px"></div>
<div class="dv" style="left:1159px;top:1px;height:28px"></div>
<div class="dv" style="left:1309px;top:1px;height:28px"></div>
</div>
</div>
</div></body></html>
